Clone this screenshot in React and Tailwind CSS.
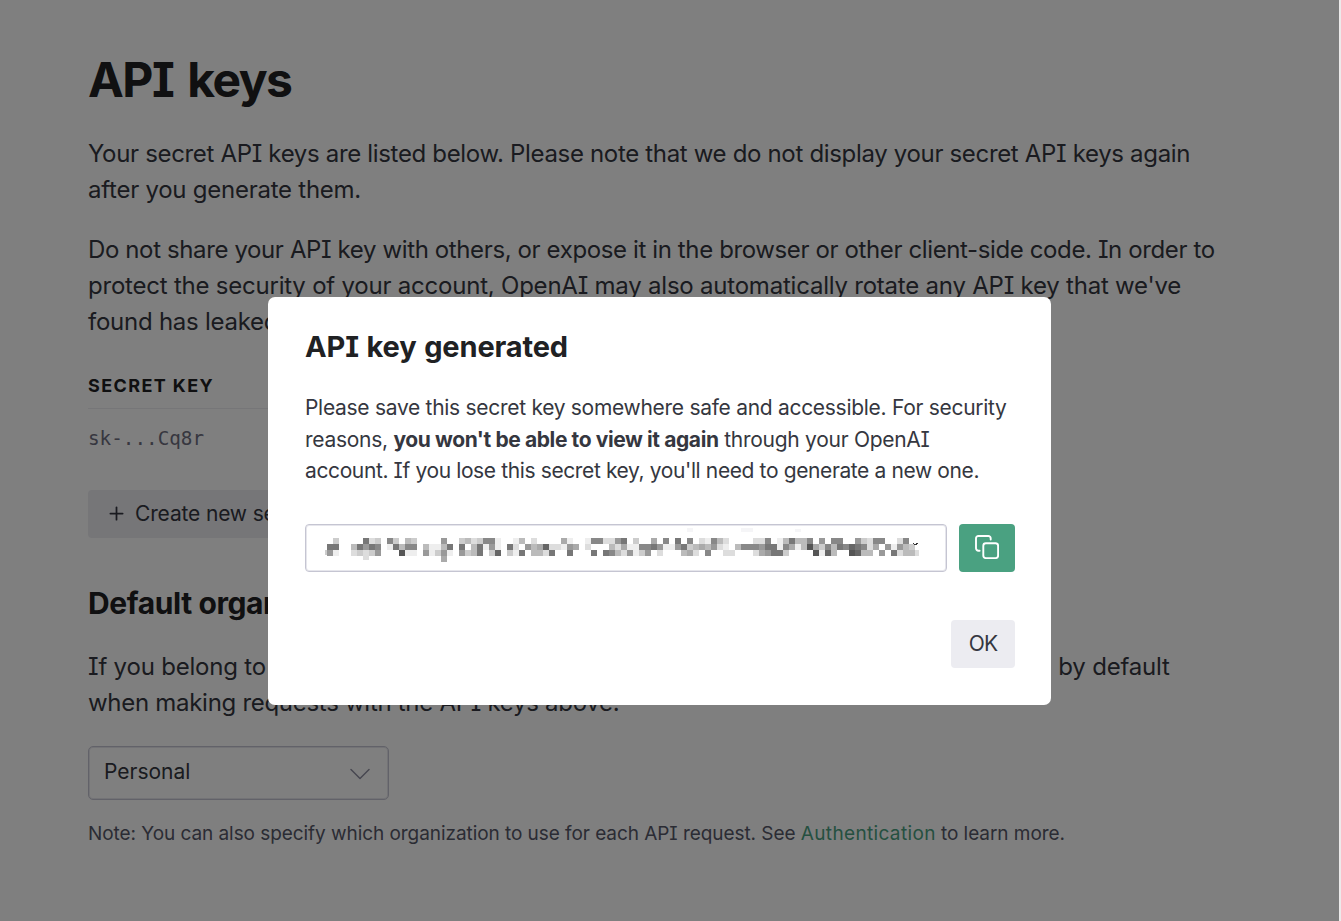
import { Plus } from "lucide-react";

// Grey level of every block in the masked key, one hex digit per block
const maskRows = [
  "fcffff7dcf" + "8cfbcffff9" + "ffcbdc88ef" + "febfdffffa" + "effe88dd97" + "fcffaf8f7f" + "8fde8bdfff" + "fdd8feb7bb" + "8f9f88ff9c" + "d88ffd8ff",
  "77ffb7978f" + "e7b88fbeeb" + "7f7fb7e9ef" + "7df9ba6dde" + "9afdfffbda" + "ee8879ee97" + "cbab9defb8" + "88977e8aeb" + "5ac8b78678" + "daf9e9bcf",
  "9effdcdc9f" + "ff5eef9ec9" + "ef9cb7fc6f" + "ce7fbbd7ff" + "7fff7f78bd" + "9ec9fdfffb" + "adf8ffddff" + "fda977cfff" + "f5e6bff56b" + "bf9f7dbbd",
];

function MaskedKey() {
  return (
    <svg width="600" height="40" viewBox="0 0 600 40" shapeRendering="crispEdges" aria-label="Secret key">
      {maskRows.map((row, y) =>
        row.split("").map((level, x) =>
          level === "f" ? null : (
            <rect key={`${x}-${y}`} x={4 + x * 6} y={10 + y * 6} width={x === 98 ? 4 : 6} height={6} fill={`#${level}${level}${level}`} />
          )
        )
      )}
      <rect x="2" y="22" width="2" height="5" fill="#ccc" />
      <rect x="40" y="28" width="6" height="4" fill="#ddd" />
      <rect x="118" y="28" width="6" height="6" fill="#aaa" />
      <rect x="364" y="0" width="6" height="4" fill="#f5f5f7" />
      <rect x="418" y="0" width="12" height="4" fill="#f5f5f7" />
      <rect x="472" y="1" width="6" height="3" fill="#f5f5f7" />
      <path d="M590 15h1v1h2v-1h2v1h-1v1h-3v-1h-1z" fill="#333" />
    </svg>
  );
}

function CopyIcon() {
  return (
    <svg width="24" height="24" viewBox="0 0 24 24" fill="none" stroke="currentColor" strokeWidth="1.9" strokeLinecap="round" strokeLinejoin="round">
      <rect x="8.3" y="8.3" width="14.8" height="14.8" rx="2.5" />
      <path d="M4.6 15.7H3.4A2.4 2.4 0 0 1 1 13.3V3.4A2.4 2.4 0 0 1 3.4 1h9.9a2.4 2.4 0 0 1 2.4 2.4v1.2" />
    </svg>
  );
}

function ApiKeysPage() {
  return (
    <main className="h-[921px] w-[1339px] overflow-hidden bg-white pl-[88px] pt-[50px] text-2xl leading-9 text-[#353740]">
      <h1 className="text-[48px] font-bold leading-[60px] tracking-[-1.5px] text-[#202123] [word-spacing:4px]">API keys</h1>
      <p className="mt-[26px] whitespace-nowrap">
        <span className="block tracking-[-0.33px]">Your secret API keys are listed below. Please note that we do not display your secret API keys again</span>
        <span className="block tracking-[-0.25px]">after you generate them.</span>
      </p>
      <p className="mt-6 whitespace-nowrap">
        <span className="block tracking-[-0.38px]">Do not share your API key with others, or expose it in the browser or other client-side code. In order to</span>
        <span className="block tracking-[-0.22px]">protect the security of your account, OpenAI may also automatically rotate any API key that we've</span>
        <span className="block tracking-[-0.25px]">found has leaked publicly.</span>
      </p>
      <div className="mt-[28px] w-[900px]">
        <div className="flex h-[41px] items-start border-b border-[#ececf1] pt-[6px] text-[18px] font-bold leading-6 tracking-[1.4px] text-[#202123]">SECRET KEY</div>
        <div className="pt-[18px] font-['DejaVu_Sans_Mono',monospace] text-[19.3px] leading-6 text-[#6e6e80]">sk-...Cq8r</div>
      </div>
      <button className="mt-[39px] flex h-12 items-center rounded bg-[#ececf1] pb-px pl-[18px] pr-5 text-[21px] tracking-[-0.15px]">
        <Plus size={21} strokeWidth={2} className="mr-[8px]" />
        Create new secret key
      </button>
      <h2 className="mt-[47px] text-[30px] font-bold leading-9 tracking-[-0.4px] text-[#202123]">Default organization</h2>
      <p className="mt-[28px] whitespace-nowrap">
        <span className="block tracking-[-0.2px]">If you belong to multiple organizations, this setting controls which organization is used by default</span>
        <span className="block tracking-[-0.29px]">when making requests with the API keys above.</span>
      </p>
      <div className="mt-[25px] flex h-[54px] w-[301px] items-center justify-between rounded-[5px] border border-[#c5c5d2] pb-[2px] pl-[15px] pr-[18px] text-[21px] shadow-[inset_0_0_0_1px_#e6e6ec]">
        <span>Personal</span>
        <svg width="20" height="12" viewBox="0 0 20 12" fill="none" stroke="#8e8ea0" strokeWidth="1.5" strokeLinecap="round" strokeLinejoin="round" className="mt-[3px]">
          <path d="M1 1.500l9 9 9-9" />
        </svg>
      </div>
      <p className="mt-5 whitespace-nowrap text-[19px] leading-7 tracking-[-0.06px] text-[#565869]">
        Note: You can also specify which organization to use for each API request. See <a className="tracking-[0.35px] text-[#4aa181]">Authentication</a> to learn more.
      </p>
    </main>
  );
}

function KeyDialog() {
  return (
    <div className="fixed inset-y-0 left-0 w-[1339px] bg-black/50 pl-[268px] pt-[297px]">
      <div className="h-[408px] w-[783px] rounded-[7px] bg-white pl-[37px] pr-9 pt-8 text-[21px] leading-[31.5px] text-[#353740]">
        <h2 className="text-[29px] font-bold leading-9 tracking-[-0.15px] text-[#202123] [word-spacing:1px]">API key generated</h2>
        <p className="mt-[27px] whitespace-nowrap">
          <span className="block tracking-[-0.29px]">Please save this secret key somewhere safe and accessible. For security</span>
          <span className="block tracking-[-0.28px]">
            reasons, <b className="tracking-[-0.4px]">you won't be able to view it again</b> through your OpenAI
          </span>
          <span className="block tracking-[-0.38px]">account. If you lose this secret key, you'll need to generate a new one.</span>
        </p>
        <div className="mt-[37px] flex justify-between">
          <div className="h-[48px] w-[642px] overflow-hidden rounded border border-[#c5c5d2] pl-[17px] pt-[3px] shadow-[inset_0_0_0_1px_#e6e6ec]">
            <MaskedKey />
          </div>
          <button className="flex h-[48px] w-14 items-center justify-center rounded bg-[#4aa181] pb-px text-white">
            <CopyIcon />
          </button>
        </div>
        <div className="mt-12 flex justify-end">
          <button className="h-12 w-[64px] rounded bg-[#ececf1] tracking-[-0.8px]">OK</button>
        </div>
      </div>
    </div>
  );
}

export default function App() {
  return (
    <div className="h-[921px] overflow-hidden bg-[#eceaea] font-[Inter,sans-serif] [font-feature-settings:'cv08']">
      <ApiKeysPage />
      <KeyDialog />
    </div>
  );
}
